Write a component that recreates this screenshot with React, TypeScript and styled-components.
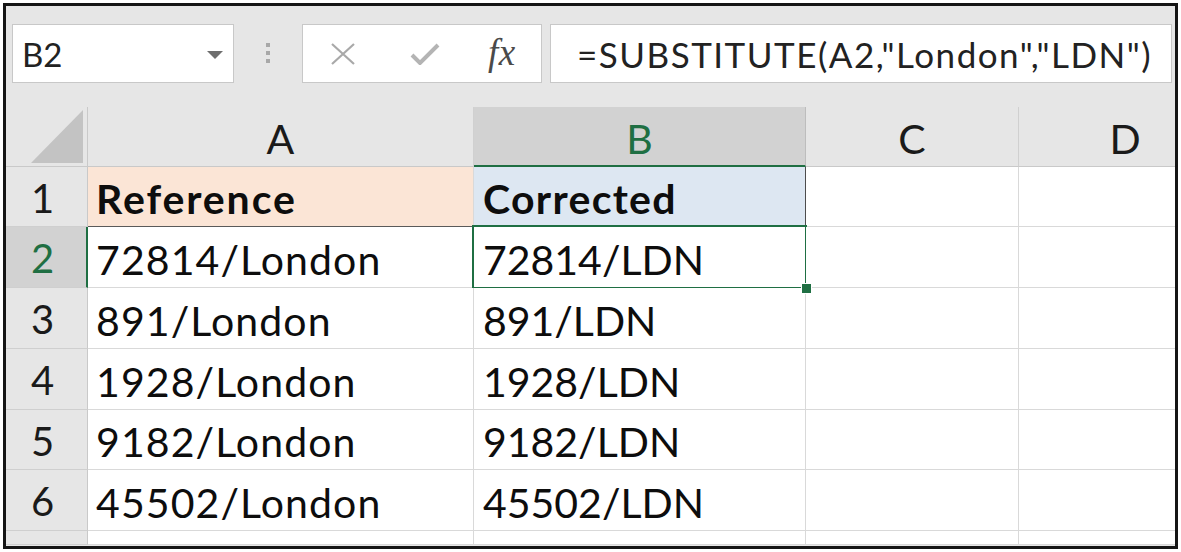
import React from "react";
import styled, { createGlobalStyle } from "styled-components";

const Global = createGlobalStyle`
  html, body { margin: 0; padding: 0; background: #ffffff; }
  * { box-sizing: border-box; }
`;

const GREEN = "#1f6f43";
const FONT = `"Lato", "Open Sans", sans-serif`;

const Frame = styled.div`
  margin: 3px;
  width: 1175px;
  height: 546px;
  border: 3px solid #151515;
  background: #e6e6e6;
  display: flex;
  flex-direction: column;
  overflow: hidden;
  font-family: ${FONT};
`;

const Toolbar = styled.div`
  height: 101px;
  display: flex;
  align-items: flex-start;
  padding: 18px 0 0 6px;
  flex-shrink: 0;
`;

const Box = styled.div<{ $w: number }>`
  width: ${(p) => p.$w}px;
  height: 59px;
  background: #ffffff;
  border: 1px solid #c8c8c8;
  display: flex;
  align-items: center;
  flex-shrink: 0;
  overflow: hidden;
`;

const NameText = styled.span`
  font-size: 33px;
  color: #222;
  padding-left: 9px;
  flex: 1;
`;

const Caret = styled.svg`
  width: 16px;
  height: 8px;
  margin-right: 10px;
  margin-top: 2px;
`;

const Dots = styled.div`
  width: 68px;
  display: flex;
  flex-direction: column;
  align-items: center;
  gap: 4px;
  padding-top: 19px;
  flex-shrink: 0;
  span {
    width: 4px;
    height: 4px;
    background: #a8a8a8;
  }
`;

const FxIcons = styled.div`
  display: flex;
  align-items: center;
  width: 100%;
  padding-left: 27px;
`;

const Fx = styled.span`
  font-family: "Liberation Serif", "DejaVu Serif", serif;
  font-style: italic;
  font-size: 37px;
  color: #4a4a4a;
  margin-left: 48px;
  margin-top: -3px;
  letter-spacing: 0.5px;
`;

const Gap = styled.div<{ $w: number }>`
  width: ${(p) => p.$w}px;
  flex-shrink: 0;
`;

const FormulaText = styled.span`
  font-size: 35px;
  color: #222;
  padding-left: 26px;
  white-space: nowrap;
  letter-spacing: 1.5px;
`;

const Grid = styled.div`
  display: grid;
  grid-template-columns: 82px 386px 332px 213px 213px;
  grid-template-rows: 60px 60px 61px 61px 61px 60px 61px 14px;
  flex: 1;
`;

const Corner = styled.div`
  background: #e6e6e6;
  border-right: 1px solid #c9c9c9;
  border-bottom: 1px solid #c9c9c9;
  display: flex;
  align-items: flex-end;
  justify-content: flex-end;
  padding: 0 4px 3px 0;
`;

const ColHead = styled.div<{ $sel?: boolean }>`
  background: ${(p) => (p.$sel ? "#d2d2d2" : "#e6e6e6")};
  border-right: 1px solid ${(p) => (p.$sel ? "#bdbdbd" : "#d0d0d0")};
  border-bottom: ${(p) => (p.$sel ? `2px solid ${GREEN}` : "1px solid #c9c9c9")};
  display: flex;
  align-items: center;
  justify-content: center;
  font-size: 41px;
  padding-top: 4px;
  color: ${(p) => (p.$sel ? GREEN : "#1a1a1a")};
`;

const RowHead = styled.div<{ $sel?: boolean }>`
  background: ${(p) => (p.$sel ? "#d2d2d2" : "#e6e6e6")};
  border-right: ${(p) => (p.$sel ? `2px solid ${GREEN}` : "1px solid #c9c9c9")};
  border-bottom: 1px solid #cfcfcf;
  display: flex;
  align-items: center;
  justify-content: center;
  font-size: 40px;
  padding-top: 2px;
  padding-right: ${(p) => (p.$sel ? "7px" : "8px")};
  color: ${(p) => (p.$sel ? GREEN : "#1a1a1a")};
`;

type Tone = "peach" | "blue" | undefined;

const Cell = styled.div<{
  $tone?: Tone;
  $bold?: boolean;
  $darkBottom?: boolean;
  $darkRight?: boolean;
  $pad?: number;
  $ls?: number;
}>`
  position: relative;
  background: ${(p) => (p.$tone === "peach" ? "#fbe5d6" : p.$tone === "blue" ? "#dde7f2" : "#ffffff")};
  border-right: 1px solid ${(p) => (p.$darkRight ? "#4d4d4d" : "#d9d9d9")};
  border-bottom: 1px solid ${(p) => (p.$darkBottom ? "#5a5a5a" : "#d9d9d9")};
  display: flex;
  align-items: center;
  padding-left: ${(p) => p.$pad ?? 8}px;
  padding-top: 4px;
  font-size: 41px;
  font-weight: ${(p) => (p.$bold ? 700 : 400)};
  color: #0d0d0d;
  white-space: nowrap;
  letter-spacing: ${(p) => p.$ls ?? (p.$bold ? 1.9 : 1.1)}px;
`;

const Selected = styled(Cell)`
  &::after {
    content: "";
    position: absolute;
    top: -2px;
    left: -2px;
    right: -2px;
    bottom: -2px;
    border: 2px solid ${GREEN};
    pointer-events: none;
  }
`;

const Handle = styled.span`
  position: absolute;
  right: -6px;
  bottom: -6px;
  width: 9px;
  height: 9px;
  background: ${GREEN};
  outline: 1px solid #ffffff;
  z-index: 2;
`;

const cols = ["A", "B", "C", "D"];
const rows: [string, string][] = [
  ["72814/London", "72814/LDN"],
  ["891/London", "891/LDN"],
  ["1928/London", "1928/LDN"],
  ["9182/London", "9182/LDN"],
  ["45502/London", "45502/LDN"],
];

export default function App() {
  return (
    <>
      <Global />
      <Frame>
        <Toolbar>
          <Box $w={222}>
            <NameText>B2</NameText>
            <Caret viewBox="0 0 16 8">
              <path d="M0 0 H16 L8 8 Z" fill="#6e6e6e" />
            </Caret>
          </Box>
          <Dots>
            <span />
            <span />
            <span />
          </Dots>
          <Box $w={240}>
            <FxIcons>
              <svg width="26" height="22" viewBox="0 0 26 22">
                <path d="M2 1 L24 21 M24 1 L2 21" stroke="#a9a9a9" strokeWidth="2.2" fill="none" />
              </svg>
              <Gap $w={54} />
              <svg width="30" height="22" viewBox="0 0 30 22">
                <path d="M2 12 L10 20 L28 2" stroke="#b4b4b4" strokeWidth="4" fill="none" />
              </svg>
              <Fx>fx</Fx>
            </FxIcons>
          </Box>
          <Gap $w={8} />
          <Box $w={622}>
            <FormulaText>=SUBSTITUTE(A2,"London","LDN")</FormulaText>
          </Box>
        </Toolbar>
        <Grid>
          <Corner>
            <svg width="52" height="53" viewBox="0 0 52 53">
              <path d="M52 0 V53 H0 Z" fill="#c3c3c3" />
            </svg>
          </Corner>
          {cols.map((c) => (
            <ColHead key={c} $sel={c === "B"}>
              {c}
            </ColHead>
          ))}

          <RowHead>1</RowHead>
          <Cell $tone="peach" $bold $darkBottom>
            Reference
          </Cell>
          <Cell $tone="blue" $bold $darkRight $pad={9} $ls={1.3}>
            Corrected
          </Cell>
          <Cell />
          <Cell />

          {rows.map(([a, b], i) => {
            const n = i + 2;
            const sel = n === 2;
            return (
              <React.Fragment key={n}>
                <RowHead $sel={sel}>{n}</RowHead>
                <Cell>{a}</Cell>
                {sel ? (
                  <Selected $pad={9} $ls={0}>
                    {b}
                    <Handle />
                  </Selected>
                ) : (
                  <Cell $pad={9} $ls={0}>
                    {b}
                  </Cell>
                )}
                <Cell />
                <Cell />
              </React.Fragment>
            );
          })}

          <RowHead />
          <Cell />
          <Cell />
          <Cell />
          <Cell />
        </Grid>
      </Frame>
    </>
  );
}
